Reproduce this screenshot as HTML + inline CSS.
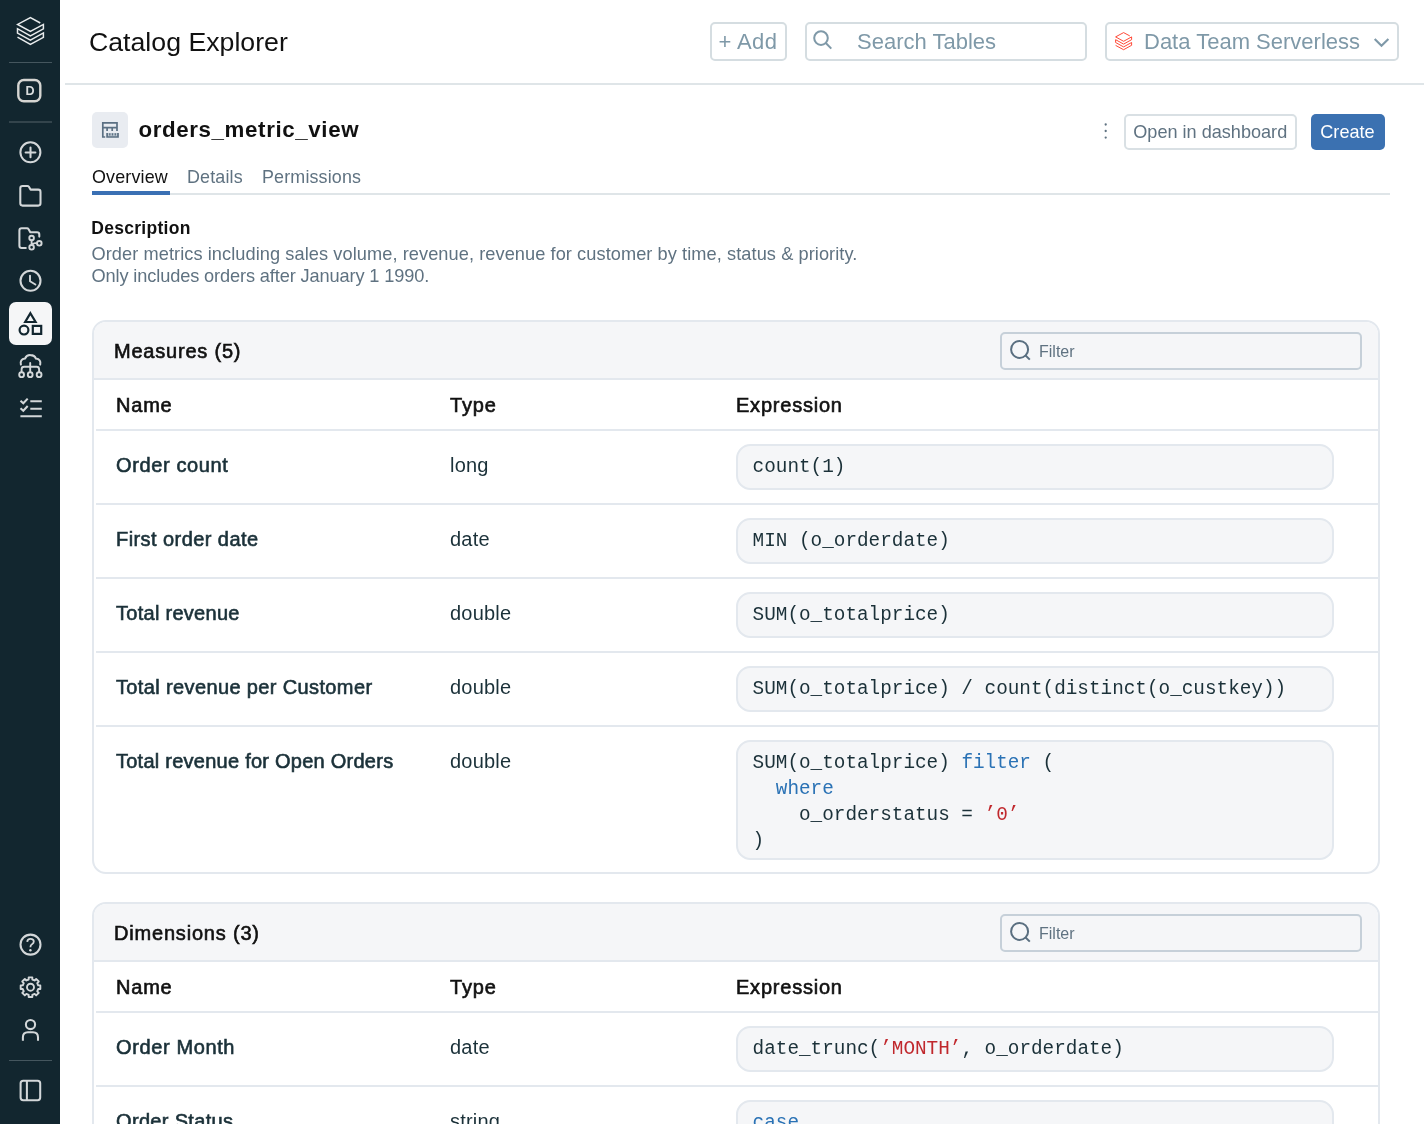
<!DOCTYPE html>
<html lang="en">
<head>
<meta charset="utf-8">
<title>Catalog Explorer</title>
<style>
*{box-sizing:border-box;margin:0;padding:0}
html,body{width:1424px;height:1124px;overflow:hidden;background:#fff}
body{font-family:"Liberation Sans",sans-serif;color:#1b3139;position:relative;will-change:transform}
.abs{position:absolute}
.t{position:absolute;white-space:nowrap;line-height:1}
/* sidebar */
#side{position:absolute;left:0;top:0;width:60px;height:1124px;background:#12262f}
#side .sep{position:absolute;left:9px;width:43px;height:1px;background:#45565e}
#side svg{position:absolute;overflow:visible}
#side .active{position:absolute;left:8.7px;top:302px;width:43.5px;height:43px;border-radius:7px;background:#f5f6f7}
/* header */
#hline{position:absolute;left:65px;top:83px;width:1359px;height:2px;background:#dfe5e8}
.hbtn{position:absolute;top:22px;height:39px;border:2px solid #d5dde1;border-radius:5px;background:#fff}
.hbtn .t{color:#7f99a8;font-size:22px}
/* page */
#iconbox{position:absolute;left:92px;top:112px;width:35.5px;height:35.5px;border-radius:5px;background:#e9ecf1}
.tab{font-size:17.9px;letter-spacing:.16px;color:#5f7281}
#tabline{position:absolute;left:92px;top:193px;width:1298px;height:2px;background:#dfe5e8}
#tabsel{position:absolute;left:92px;top:191px;width:78px;height:4px;background:#3a70b4}
.btn{position:absolute;border-radius:5px;font-size:18.1px}
/* cards */
.card{position:absolute;left:92px;width:1288px;border:2px solid #e3e8ee;border-radius:14px;background:#fff;overflow:hidden}
.card .chead{position:absolute;left:0;top:0;width:100%;height:58px;background:#f5f6f8;border-bottom:2px solid #e3e8ee}
.card .ctitle{left:20px;top:18.8px;font-size:20px;color:#111;-webkit-text-stroke:.62px #111}
.filter{position:absolute;left:906px;top:10px;width:362px;height:37.5px;border:2px solid #c6d0d9;border-radius:5px;background:#f5f6f8}
.filter .t{left:37px;top:10px;font-size:16px;color:#5f7281}
.rowline{position:absolute;left:2px;width:1284px;height:2px;background:#e3e8ee}
.th{font-size:20px;color:#111;-webkit-text-stroke:.62px #111}
.nm{font-size:20px;color:#1b3139;-webkit-text-stroke:.62px #1b3139;left:22px}
.ty{font-size:20px;letter-spacing:.2px;color:#1b3139;left:356px}
.code{position:absolute;left:642px;width:598px;border:2px solid #e3e8ee;border-radius:14.5px;background:#f5f6f8;font-family:"Liberation Mono",monospace;font-size:19.33px;line-height:26px;color:#1b3139;white-space:pre;padding:7.6px 0 0 14.6px}
.kw{color:#2a72b5}
.st{color:#c0282d}
</style>
</head>
<body>
<div id="side">
  <div class="sep" style="top:62px"></div>
  <div class="sep" style="top:121px;height:2px;background:#33444c"></div>
  <div class="active"></div>
  <svg width="60" height="1124" viewBox="0 0 60 1124" fill="none" stroke="#d3d7d9" stroke-width="2.05" stroke-linecap="round" stroke-linejoin="round" style="left:0;top:0">
    <!-- logo -->
    <path d="M40.3 23 L30.4 17.5 L17.6 24.4 L30.4 31.5 L43.4 24.4 L43.4 28.9 L30.4 35.9 L17.5 28.7 L17.5 33.1 L30.4 40.1 L43.4 32.9 L43.4 37.4 L30.4 44.5 L17.5 37.2" stroke="#e9eced" stroke-width="1.5" stroke-linecap="butt" stroke-linejoin="miter"/>
    <!-- D box -->
    <rect x="18.3" y="80" width="22" height="21.2" rx="5.5" stroke-width="2.4" stroke="#d6d5d2"/>
    <!-- circle plus -->
    <circle cx="30.4" cy="152.3" r="10"/>
    <path d="M25.6 152.4H35.4M30.5 147.5V157.3"/>
    <!-- folder -->
    <path d="M20.3 188.2 Q20.3 185.9 22.6 185.9 L27.3 185.9 Q28.3 185.9 28.9 186.8 L30.6 189.6 L38.2 189.6 Q40.5 189.6 40.5 191.9 L40.5 203.3 Q40.5 205.6 38.2 205.6 L22.6 205.6 Q20.3 205.6 20.3 203.3 Z"/>
    <!-- folder branch -->
    <path d="M25.8 248 L21.7 248 Q19.4 248 19.4 245.7 L19.4 230.6 Q19.4 228.3 21.7 228.3 L27 228.3 Q28 228.3 28.6 229.2 L30.3 232.2 L37 232.2 Q39.3 232.2 39.3 234.5 L39.3 236.6"/>
    <circle cx="31.6" cy="238" r="2.3" stroke-width="1.9"/>
    <circle cx="31.6" cy="247.3" r="2.3" stroke-width="1.9"/>
    <circle cx="39.3" cy="243.3" r="2.3" stroke-width="1.9"/>
    <path d="M31.6 240.4V244.9M32.3 245 Q33 242.6 37 243.2" stroke-width="1.9"/>
    <!-- clock -->
    <circle cx="30.5" cy="280.8" r="10"/>
    <path d="M30 275.6V281.3L35.4 284.5" stroke-width="1.9"/>
    <!-- cloud tree -->
    <path d="M20.9 364.6 Q19.6 359.4 25 358.6 Q26.6 354.9 30.4 355.1 Q34.6 355.1 35.9 358.6 Q41.4 359.4 40.2 364.6"/>
    <path d="M30.2 363V372M21.6 372V369.2Q21.6 366.7 24.1 366.7H36.6Q39.1 366.7 39.1 369.2V372" stroke-width="1.9"/>
    <circle cx="21.6" cy="374.7" r="2.4" stroke-width="1.9"/>
    <circle cx="30.2" cy="374.7" r="2.4" stroke-width="1.9"/>
    <circle cx="39.1" cy="374.7" r="2.4" stroke-width="1.9"/>
    <!-- checklist -->
    <path d="M30.3 401.3H41.8M30.3 408.8H41.8M20.4 416.3H41.8M20.5 400.8L23.3 403.3L27.7 398.6M20.5 408.2L23.3 410.7L27.7 406" stroke-linecap="butt" stroke-linejoin="miter"/>
    <!-- help -->
    <circle cx="30.5" cy="944.6" r="10"/>
    <path d="M27.2 941.9 Q27.4 938.8 30.5 938.8 Q33.8 938.8 33.8 941.6 Q33.8 943.3 32 944.3 Q30.4 945.2 30.4 947.2" stroke-width="1.8" stroke-linecap="butt"/>
    <circle cx="30.4" cy="950.3" r="1.2" fill="#d9dcdd" stroke="none"/>
    <!-- gear -->
    <circle cx="30.5" cy="987.2" r="3.5" stroke-width="1.9"/>
    <path d="M28.66 979.52 L28.68 977.37 L32.32 977.37 L32.34 979.52 L34.63 980.46 L36.16 978.96 L38.74 981.54 L37.24 983.07 L38.18 985.36 L40.33 985.38 L40.33 989.02 L38.18 989.04 L37.24 991.33 L38.74 992.86 L36.16 995.44 L34.63 993.94 L32.34 994.88 L32.32 997.03 L28.68 997.03 L28.66 994.88 L26.37 993.94 L24.84 995.44 L22.26 992.86 L23.76 991.33 L22.82 989.04 L20.67 989.02 L20.67 985.38 L22.82 985.36 L23.76 983.07 L22.26 981.54 L24.84 978.96 L26.37 980.46 Z" stroke-linejoin="round" stroke-width="1.9"/>
    <!-- person -->
    <circle cx="30.5" cy="1024.5" r="4.6"/>
    <path d="M22.9 1040.7V1037.2Q22.9 1032.2 27.9 1032.2H33Q38 1032.2 38 1037.2V1040.7" stroke-linecap="butt"/>
    <!-- panel -->
    <rect x="20.6" y="1080.7" width="19.6" height="19.5" rx="2.6"/>
    <path d="M26.9 1080.7V1100.2" stroke-linecap="butt"/>
  </svg>
  <svg width="44" height="43" viewBox="0 0 44 43" fill="none" stroke="#12262f" stroke-width="2.2" stroke-linejoin="miter" style="left:9px;top:302px">
    <path d="M21.4 11.2 L26.6 20 L16.2 20 Z"/>
    <circle cx="15" cy="28.1" r="4.4"/>
    <rect x="23.8" y="23.9" width="8.4" height="8"/>
  </svg>
  <div class="t" style="left:25.6px;top:84.5px;font-size:12.6px;font-weight:bold;color:#d9dcdd">D</div>

  <div class="sep" style="top:1060px"></div>
</div>

<div class="t" style="left:89px;top:28.6px;font-size:26.7px;color:#111">Catalog Explorer</div>
<div class="hbtn" style="left:710px;width:77px"><div class="t" style="left:6.5px;top:6.6px;letter-spacing:.4px">+ Add</div></div>
<div class="hbtn" style="left:805px;width:282px"><div class="t" style="left:50px;top:6.6px">Search Tables</div></div>
<div class="hbtn" style="left:1105px;width:293.5px"><div class="t" style="left:37px;top:6.5px">Data Team Serverless</div></div>

<svg class="abs" style="left:805px;top:22px" width="40" height="39" viewBox="0 0 40 39" fill="none" stroke="#7f99a8" stroke-width="2"><circle cx="16" cy="16.1" r="6.8"/><path d="M20.8 21L26.3 26.6"/></svg>
<svg class="abs" style="left:1110px;top:28px" width="28" height="26" viewBox="0 0 28 26" fill="none" stroke="#ff3621" stroke-width=".9"><path d="M19.8 7.9 L13.6 4.6 L5.6 8.9 L13.6 13.3 L21.6 8.9 L21.6 11.7 L13.6 16.1 L5.6 11.7 L5.6 14.5 L13.6 18.9 L21.6 14.5 L21.6 17.3 L13.6 21.7 L5.6 17.4"/></svg>
<svg class="abs" style="left:1370px;top:32px" width="24" height="20" viewBox="0 0 24 20" fill="none" stroke="#7f99a8" stroke-width="2.1"><path d="M4.7 6.9L11.5 13.8L18.4 6.9"/></svg>
<div id="hline"></div>

<div id="iconbox"><svg class="abs" style="left:0;top:0" width="36" height="36" viewBox="0 0 36 36" fill="none" stroke="#5b7083" stroke-width="1.7"><path d="M13.2 25H10.8V10.8H25V18.9M10.8 15.6H25M15.1 16V18.9M20.2 16V18.9"/><path d="M15.1 21V25H26V21" fill="#5b7083" fill-opacity=".3"/><path d="M17.8 21.3V23.4M20.5 21.3V23.4M23.3 21.3V23.4" stroke-width="1.3"/></svg></div>
<svg class="abs" style="left:1100px;top:120px" width="12" height="22" viewBox="0 0 12 22" fill="#5f7281"><circle cx="5.7" cy="4.5" r="1.15"/><circle cx="5.7" cy="11" r="1.15"/><circle cx="5.7" cy="17.6" r="1.15"/></svg>
<div class="t" style="left:138.4px;top:119.2px;font-size:22.3px;letter-spacing:.63px;font-weight:bold;color:#111">orders_metric_view</div>
<div class="t tab" style="left:92px;top:169.2px;color:#111">Overview</div>
<div class="t tab" style="left:187px;top:169.2px">Details</div>
<div class="t tab" style="left:262px;top:169.2px">Permissions</div>
<div id="tabline"></div>
<div id="tabsel"></div>

<div class="btn" style="left:1124px;top:114px;height:36px;width:173px;border:2px solid #d9e0e4;background:#fff"><div class="t" style="left:7.3px;top:6.8px;color:#5f7281">Open in dashboard</div></div>
<div class="btn" style="left:1311px;top:114px;height:36px;width:74px;background:#3b71b1"><div class="t" style="left:9.3px;top:8.8px;color:#fff">Create</div></div>

<div class="t" style="left:91.3px;top:220.3px;font-size:17.5px;letter-spacing:.28px;font-weight:bold;color:#111">Description</div>
<div class="t" style="left:91.5px;top:245.2px;font-size:18.2px;letter-spacing:.075px;color:#5f7281">Order metrics including sales volume, revenue, revenue for customer by time, status &amp; priority.</div>
<div class="t" style="left:91.5px;top:267.2px;font-size:18.2px;letter-spacing:-.12px;color:#5f7281">Only includes orders after January 1 1990.</div>

<!-- Measures card -->
<div class="card" style="top:320px;height:554px">
  <div class="chead"><div class="t ctitle" style="letter-spacing:0.79px">Measures (5)</div><div class="filter"><svg class="abs" style="left:0;top:0" width="36" height="33" viewBox="0 0 36 33" fill="none" stroke="#5a6f80" stroke-width="2"><circle cx="17.6" cy="15.4" r="8.5"/><path d="M23.6 21.5L27.8 25.6"/></svg><div class="t">Filter</div></div></div>
  <div class="t th" style="left:22px;top:73px;letter-spacing:0.78px">Name</div>
  <div class="t th" style="left:356px;top:73px;letter-spacing:0.85px">Type</div>
  <div class="t th" style="left:642px;top:73px;letter-spacing:0.78px">Expression</div>
  <div class="rowline" style="top:107px"></div>
  <div class="t nm" style="top:132.8px;letter-spacing:0.62px">Order count</div><div class="t ty" style="top:132.5px">long</div>
  <div class="code" style="top:122px;height:46px">count(1)</div>
  <div class="rowline" style="top:181px"></div>
  <div class="t nm" style="top:206.8px;letter-spacing:0.43px">First order date</div><div class="t ty" style="top:206.5px">date</div>
  <div class="code" style="top:196px;height:46px">MIN (o_orderdate)</div>
  <div class="rowline" style="top:255px"></div>
  <div class="t nm" style="top:280.8px;letter-spacing:0.28px">Total revenue</div><div class="t ty" style="top:280.5px">double</div>
  <div class="code" style="top:270px;height:46px">SUM(o_totalprice)</div>
  <div class="rowline" style="top:329px"></div>
  <div class="t nm" style="top:354.8px;letter-spacing:0.37px">Total revenue per Customer</div><div class="t ty" style="top:354.5px">double</div>
  <div class="code" style="top:344px;height:46px">SUM(o_totalprice) / count(distinct(o_custkey))</div>
  <div class="rowline" style="top:403px"></div>
  <div class="t nm" style="top:428.8px;letter-spacing:0.25px">Total revenue for Open Orders</div><div class="t ty" style="top:428.5px">double</div>
  <div class="code" style="top:418px;height:120px">SUM(o_totalprice) <span class="kw">filter</span> (
  <span class="kw">where</span>
    o_orderstatus = <span class="st">’0’</span>
)</div>
</div>

<!-- Dimensions card -->
<div class="card" style="top:902px;height:300px">
  <div class="chead"><div class="t ctitle" style="letter-spacing:0.81px">Dimensions (3)</div><div class="filter"><svg class="abs" style="left:0;top:0" width="36" height="33" viewBox="0 0 36 33" fill="none" stroke="#5a6f80" stroke-width="2"><circle cx="17.6" cy="15.4" r="8.5"/><path d="M23.6 21.5L27.8 25.6"/></svg><div class="t">Filter</div></div></div>
  <div class="t th" style="left:22px;top:73px;letter-spacing:0.78px">Name</div>
  <div class="t th" style="left:356px;top:73px;letter-spacing:0.85px">Type</div>
  <div class="t th" style="left:642px;top:73px;letter-spacing:0.78px">Expression</div>
  <div class="rowline" style="top:107px"></div>
  <div class="t nm" style="top:132.8px;letter-spacing:0.62px">Order Month</div><div class="t ty" style="top:132.5px">date</div>
  <div class="code" style="top:122px;height:46px">date_trunc(<span class="st">’MONTH’</span>, o_orderdate)</div>
  <div class="rowline" style="top:181px"></div>
  <div class="t nm" style="top:206.8px;letter-spacing:0.33px">Order Status</div><div class="t ty" style="top:206.5px">string</div>
  <div class="code" style="top:196px;height:120px"><span class="kw">case</span></div>
</div>
</body>
</html>
